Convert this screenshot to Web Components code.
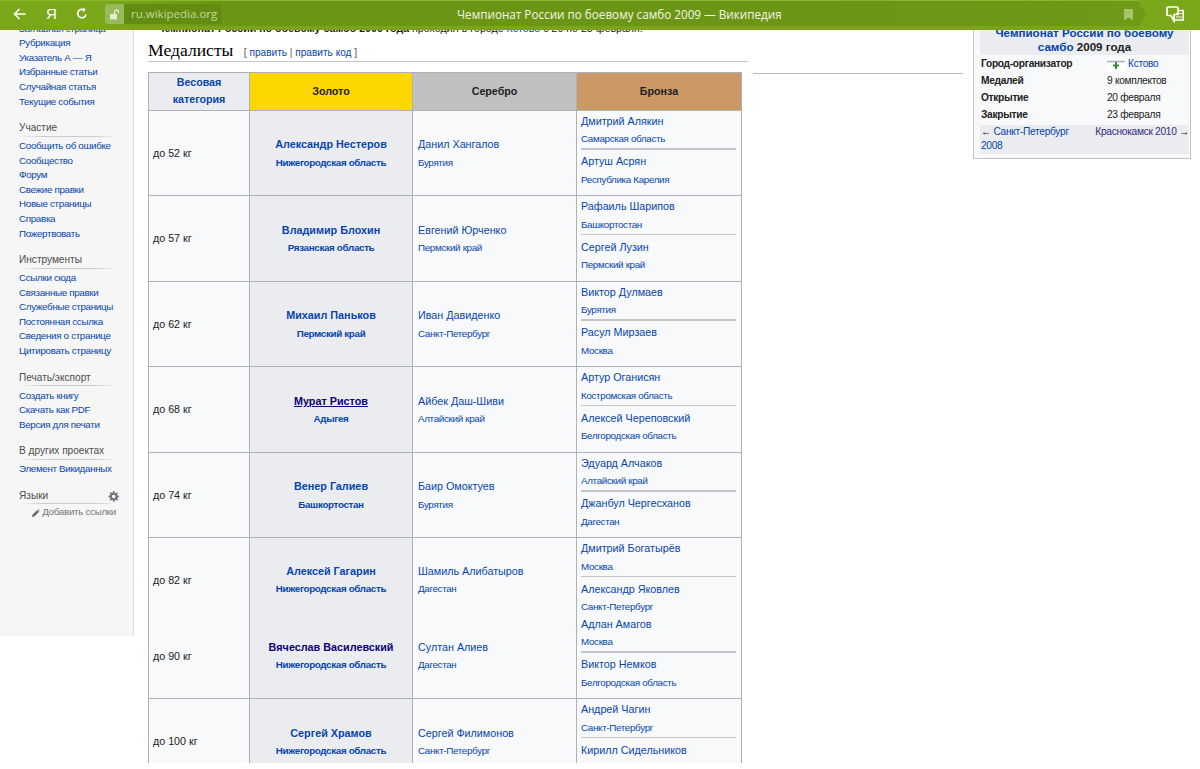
<!DOCTYPE html>
<html lang="ru">
<head>
<meta charset="utf-8">
<title>Чемпионат России по боевому самбо 2009 — Википедия</title>
<style>
  html, body { margin: 0; background: #fff; }
  body { font-family: "Liberation Sans", Arial, sans-serif; color: #202122; }
  #screen { position: relative; height: 763px; overflow: hidden; display: flex; align-items: flex-start; }
</style>
</head>
<body>
<div id="screen">
  <browser-bar title-text="Чемпионат России по боевому самбо 2009 — Википедия" address="ru.wikipedia.org"></browser-bar>

  <wiki-sidebar>
    <side-portlet first>
      <a>Заглавная страница</a><a>Рубрикация</a><a>Указатель А — Я</a><a>Избранные статьи</a><a>Случайная статья</a><a>Текущие события</a>
    </side-portlet>
    <side-portlet heading="Участие">
      <a>Сообщить об ошибке</a><a>Сообщество</a><a>Форум</a><a>Свежие правки</a><a>Новые страницы</a><a>Справка</a><a>Пожертвовать</a>
    </side-portlet>
    <side-portlet heading="Инструменты">
      <a>Ссылки сюда</a><a>Связанные правки</a><a>Служебные страницы</a><a>Постоянная ссылка</a><a>Сведения о странице</a><a>Цитировать страницу</a>
    </side-portlet>
    <side-portlet heading="Печать/экспорт">
      <a>Создать книгу</a><a>Скачать как PDF</a><a>Версия для печати</a>
    </side-portlet>
    <side-portlet heading="В других проектах">
      <a>Элемент Викиданных</a>
    </side-portlet>
    <side-portlet heading="Языки" gear>
      <lang-add>Добавить ссылки</lang-add>
    </side-portlet>
  </wiki-sidebar>

  <wiki-article>
    <medal-table></medal-table>
  </wiki-article>

  <info-box></info-box>
</div>

<script>
// Browser toolbar, lies over the scrolled page
class BrowserBar extends HTMLElement {
  constructor() {
    super();
    this.attachShadow({ mode: 'open' });
  }

  connectedCallback() {
    this.shadowRoot.innerHTML = `
      <style>
        :host {
          position: absolute;
          top: 0;
          left: 0;
          right: 0;
          height: 30px;
          z-index: 5;
          display: block;
          font-family: "Open Sans", "Liberation Sans", sans-serif;
        }
        .bar {
          height: 30px;
          box-sizing: border-box;
          border-top: 1px solid #8cb52c;
          border-bottom: 4px solid #7ba41b;
          background: linear-gradient(90deg, #7ba71b 0, #7ba71b 95px, #6b9515 230px, #6b9515 800px, #6f9a17 1139px);
          display: flex;
          align-items: center;
          position: relative;
          color: #fff;
        }
        .nav { display: flex; align-items: center; width: 105px; flex: none; }
        .nav svg, .nav span { display: block; }
        .back { margin-left: 13px; }
        .ya { margin-left: 20px; width: 9px; font: 15px "Liberation Sans", sans-serif; text-align: center; }
        .reload { margin-left: 21px; }
        .lock {
          width: 19px;
          height: 20px;
          margin-top: 1px;
          border-radius: 3px 0 0 3px;
          background: #97ba5a;
          display: flex;
          align-items: center;
          justify-content: center;
          flex: none;
        }
        .addr {
          height: 20px;
          margin-top: 1px;
          width: 98px;
          flex: none;
          box-sizing: border-box;
          padding-left: 7px;
          background: #648c13;
          border-radius: 0 3px 3px 0;
          font-size: 11.5px;
          line-height: 20px;
          color: #c5d79b;
          white-space: nowrap;
        }
        .title {
          position: absolute;
          left: 457px;
          top: 3px;
          line-height: 20px;
          font-size: 11.7px;
          color: #f2f6e6;
          white-space: nowrap;
        }
        .right {
          position: absolute;
          right: 0;
          top: -1px;
          width: 61px;
          height: 30px;
          background: #7ba71b;
        }
        .chevron { position: absolute; left: 0; top: 3px; }
        .mark { position: absolute; left: 1124px; top: 8px; }
        .bubbles { position: absolute; left: 27px; top: 6px; }
      </style>
      <div class="bar">
        <div class="nav">
          <svg class="back" width="13" height="12" viewBox="0 0 13 12" fill="none" stroke="#fff" stroke-width="1.6">
            <path d="M12.5 6H1.500M6.500 1L1.500 6l5 5"/>
          </svg>
          <span class="ya">Я</span>
          <svg class="reload" width="12" height="13" viewBox="0 0 12 13" fill="none" stroke="#fff" stroke-width="1.6">
            <path d="M10 7.500a4.200 4.200 0 1 1-2-4.600"/>
            <path d="M7 0.500l2.800 2.300L7 5.200" fill="#fff" stroke="none"/>
          </svg>
        </div>
        <div class="lock">
          <svg width="11" height="11" viewBox="0 0 11 11">
            <path d="M1 5h7v5.500H1z" fill="#e4edd0"/>
            <path d="M5.500 5V3a2 2 0 0 1 4 0v1" fill="none" stroke="#e4edd0" stroke-width="1.3"/>
          </svg>
        </div>
        <div class="addr">${this.getAttribute('address')}</div>
        <div class="title">${this.getAttribute('title-text')}</div>
        <svg class="mark" width="9" height="12" viewBox="0 0 9 12"><path d="M0 0h9v11.500L4.500 8.500 0 11.500z" fill="#a6c26a"/></svg>
        <div class="right">
          <svg class="chevron" width="8" height="23" viewBox="0 0 8 23"><path d="M0 0l7.500 11.500L0 23z" fill="#6f9a17"/></svg>
          <svg class="bubbles" width="18" height="17" viewBox="0 0 18 17" fill="none" stroke="#fff" stroke-width="1.7">
            <path d="M2 1h9a1 1 0 0 1 1 1v6.500H8V15L4.800 9.500H2a1 1 0 0 1-1-1V2a1 1 0 0 1 1-1z"/>
            <path d="M12 4.500h5.200V14H8"/>
            <path d="M10 7.500h5.500M10 11h5.500" stroke-width="1.2"/>
          </svg>
        </div>
      </div>
    `;
  }
}

class WikiSidebar extends HTMLElement {
  constructor() {
    super();
    this.attachShadow({ mode: 'open' });
  }

  connectedCallback() {
    this.shadowRoot.innerHTML = `
      <style>
        :host {
          display: block;
          flex: none;
          box-sizing: border-box;
          width: 134px;
          height: 636px;
          padding: 21.6px 15px 0 19px;
          background: #f6f6f6;
          border-right: 1px solid #cfe2f3;
        }
      </style>
      <slot></slot>
    `;
  }
}

// One block of sidebar links
class SidePortlet extends HTMLElement {
  constructor() {
    super();
    this.attachShadow({ mode: 'open' });
  }

  connectedCallback() {
    const heading = this.getAttribute('heading');
    const gear = this.hasAttribute('gear') ? `
      <svg class="gear" width="11" height="11" viewBox="0 0 24 24" fill="#72777d">
        <path d="M24 13.500v-3l-3.200-.6a9 9 0 0 0-.9-2.200l1.800-2.700-2.100-2.100-2.700 1.800a9 9 0 0 0-2.200-.9L14.100 0h-3l-.6 3.200a9 9 0 0 0-2.200.9L5.600 2.300 3.500 4.400l1.800 2.700a9 9 0 0 0-.9 2.200L1 10.500v3l3.400.6a9 9 0 0 0 .9 2.200l-1.800 2.700 2.100 2.100 2.700-1.800a9 9 0 0 0 2.200.9l.6 3.200h3l.6-3.200a9 9 0 0 0 2.200-.9l2.700 1.800 2.100-2.100-1.800-2.700a9 9 0 0 0 .9-2.200zM12.500 16a4 4 0 1 1 0-8 4 4 0 0 1 0 8z"/>
      </svg>` : '';
    this.shadowRoot.innerHTML = `
      <style>
        :host {
          display: block;
          margin-top: 12px;
          font-size: 10.1px;
          line-height: 14.6px;
        }
        :host([first]) { margin-top: 0; }
        .head {
          position: relative;
          color: #4d4d4d;
          padding-bottom: 1px;
          margin-bottom: 2.3px;
          background: linear-gradient(90deg, #f6f6f6 0, #c8ccd1 25%, #c8ccd1 75%, #f6f6f6 100%) bottom / 100% 1px no-repeat;
        }
        .gear { position: absolute; right: -1px; top: 2px; }
        ::slotted(a) {
          display: block;
          font-size: 9.8px;
          letter-spacing: -0.32px;
          color: #0645ad;
          white-space: nowrap;
        }
      </style>
      ${heading ? `<div class="head">${heading}${gear}</div>` : ''}
      <slot></slot>
    `;
  }
}

class LangAdd extends HTMLElement {
  constructor() {
    super();
    this.attachShadow({ mode: 'open' });
  }

  connectedCallback() {
    this.shadowRoot.innerHTML = `
      <style>
        :host {
          display: flex;
          align-items: center;
          justify-content: flex-end;
          gap: 2px;
          font-size: 9.8px;
          letter-spacing: -0.3px;
          color: #72777d;
          white-space: nowrap;
          margin-top: -1.5px;
          padding-right: 2px;
        }
      </style>
      <svg width="8" height="8" viewBox="0 0 9 9"><path d="M0 9l.5-2.500L6 1l2 2-5.500 5.500zM6.700.3l.6-.3L9 1.700l-.3.600z" fill="#666"/></svg>
      <slot></slot>
    `;
  }
}

// Section heading and the text that sits above it
class WikiArticle extends HTMLElement {
  constructor() {
    super();
    this.attachShadow({ mode: 'open' });
  }

  connectedCallback() {
    this.shadowRoot.innerHTML = `
      <style>
        :host {
          display: block;
          flex: none;
          width: 600px;
          margin-left: 14px;
          padding-top: 21px;
        }
        .intro {
          font-size: 10.65px;
          line-height: 14px;
          margin-left: 9px;
          white-space: nowrap;
        }
        .intro span { color: #0645ad; }
        h2 {
          margin: 0 0 10px;
          height: 27px;
          box-sizing: border-box;
          border-bottom: 1.5px solid #c4c8cc;
          font: normal 17.6px/20px "Liberation Serif", "Times New Roman", serif;
          color: #000;
          padding-top: 5px;
          white-space: nowrap;
        }
        .edit {
          font: 10.1px "Liberation Sans", sans-serif;
          color: #54595d;
          margin-left: 6px;
        }
        .edit a { color: #0645ad; }
      </style>
      <div class="intro"><b>Чемпионат России по боевому самбо 2009 года</b> проходил в городе <span>Кстово</span> с 20 по 23 февраля.</div>
      <h2>Медалисты <span class="edit">[ <a>править</a> | <a>править код</a> ]</span></h2>
      <slot></slot>
    `;
  }
}

const ROWS = [
  { cat: 'до 52 кг', gold: ['Александр Нестеров', 'Нижегородская область'], silver: ['Данил Хангалов', 'Бурятия'], bronze: [['Дмитрий Алякин', 'Самарская область'], ['Артуш Асрян', 'Республика Карелия']] },
  { cat: 'до 57 кг', gold: ['Владимир Блохин', 'Рязанская область'], silver: ['Евгений Юрченко', 'Пермский край'], bronze: [['Рафаиль Шарипов', 'Башкортостан'], ['Сергей Лузин', 'Пермский край']] },
  { cat: 'до 62 кг', gold: ['Михаил Паньков', 'Пермский край'], silver: ['Иван Давиденко', 'Санкт-Петербург'], bronze: [['Виктор Дулмаев', 'Бурятия'], ['Расул Мирзаев', 'Москва']] },
  { cat: 'до 68 кг', gold: ['Мурат Ристов', 'Адыгея'], hover: true, silver: ['Айбек Даш-Шиви', 'Алтайский край'], bronze: [['Артур Оганисян', 'Костромская область'], ['Алексей Череповский', 'Белгородская область']] },
  { cat: 'до 74 кг', gold: ['Венер Галиев', 'Башкортостан'], silver: ['Баир Омоктуев', 'Бурятия'], bronze: [['Эдуард Алчаков', 'Алтайский край'], ['Джанбул Чергесханов', 'Дагестан']] },
  { cat: 'до 82 кг', cls: 'r82', gold: ['Алексей Гагарин', 'Нижегородская область'], silver: ['Шамиль Алибатыров', 'Дагестан'], bronze: [['Дмитрий Богатырёв', 'Москва'], ['Александр Яковлев', 'Санкт-Петербург'], ['Адлан Амагов', 'Москва'], ['Виктор Немков', 'Белгородская область']] },
  { cat: 'до 90 кг', cls: 'r90', gold: ['Вячеслав Василевский', 'Нижегородская область'], visited: true, silver: ['Султан Алиев', 'Дагестан'] },
  { cat: 'до 100 кг', gold: ['Сергей Храмов', 'Нижегородская область'], silver: ['Сергей Филимонов', 'Санкт-Петербург'], bronze: [['Андрей Чагин', 'Санкт-Петербург'], ['Кирилл Сидельников', '']] }
];

class MedalTable extends HTMLElement {
  constructor() {
    super();
    this.attachShadow({ mode: 'open' });
  }

  connectedCallback() {
    this.shadowRoot.innerHTML = `
      <style>
        :host { display: block; width: 594px; }
        table {
          width: 594px;
          table-layout: fixed;
          border-collapse: collapse;
          font-size: 10.7px;
          color: #202122;
          background: #f8f9fa;
        }
        th, td { border: 1px solid #adb2b8; padding: 0 5px; }
        tr.head { height: 37.5px; }
        th {
          font-size: 10.7px;
          line-height: 17.3px;
          color: #202122;
          background: #eaecf0;
        }
        th a { color: #0645ad; }
        th.gold { background: #ffd700; }
        th.silver { background: #c0c0c0; }
        th.bronze { background: #cc9966; }
        tr.row { height: 85.5px; }
        tr.r82 { height: 84.5px; }
        tr.r90 { height: 76.5px; }
        tr.r82 > td { border-bottom: 0; }
        tr.r90 > td { padding-bottom: 8px; border-top: 0; }
        td:first-child { padding-left: 4px; }
        td.gold { background: #eaecf0; text-align: center; font-weight: bold; }
        /* names sit a bit under the cell's middle in the plain rows */
        tr:not(.r82):not(.r90) > td.gold, tr:not(.r82):not(.r90) > td.silver { padding-top: 1.5px; }
        td.bronze { vertical-align: top; padding-top: 2.3px; padding-left: 4px; }
        .name, .region { line-height: 17.3px; white-space: nowrap; }
        .name { font-size: 10.75px; color: #0645ad; }
        .region { font-size: 9.8px; letter-spacing: -0.32px; color: #0645ad; }
        td.gold .name { font-size: 10.8px; }
        td.gold .region { font-size: 9.8px; letter-spacing: -0.33px; }
        td.gold .hover { color: #0b0080; text-decoration: underline; }
        td.gold .visited { color: #0b0080; }
        hr { border: 0; height: 1.5px; background: #c2c5c9; margin: 1px 0 3.600px; }
      </style>
      <table>
        <colgroup>
          <col style="width:101px"><col style="width:163px"><col style="width:164px"><col style="width:165px">
        </colgroup>
        <tr class="head">
          <th><a>Весовая категория</a></th>
          <th class="gold">Золото</th>
          <th class="silver">Серебро</th>
          <th class="bronze">Бронза</th>
        </tr>
        ${ROWS.map(r => this.renderRow(r)).join('')}
      </table>
    `;
  }

  person(p, nameCls = '') {
    return `<div class="name ${nameCls}">${p[0]}</div>${p[1] ? `<div class="region">${p[1]}</div>` : ''}`;
  }

  renderRow(r) {
    const nameCls = r.hover ? 'hover' : r.visited ? 'visited' : '';
    let bronze = '';
    if (r.bronze) {
      // hr only between the two medalists of one weight
      const cells = r.bronze.map((p, i) => this.person(p) + (i % 2 === 0 ? '<hr>' : ''));
      bronze = `<td class="bronze" ${r.bronze.length > 2 ? 'rowspan="2"' : ''}>${cells.join('')}</td>`;
    }
    return `
      <tr class="row ${r.cls || ''}">
        <td>${r.cat}</td>
        <td class="gold">${this.person(r.gold, nameCls)}</td>
        <td class="silver">${this.person(r.silver)}</td>
        ${bronze}
      </tr>
    `;
  }
}

class InfoBox extends HTMLElement {
  constructor() {
    super();
    this.attachShadow({ mode: 'open' });
  }

  connectedCallback() {
    this.shadowRoot.innerHTML = `
      <style>
        :host {
          display: block;
          flex: none;
          box-sizing: border-box;
          width: 218px;
          height: 149px;
          margin-left: 225px;
          margin-top: 9.5px;
          padding: 0 1px 4px 6px;
          background: #f8f9fa;
          border: 1px solid #c0c4c9;
          font-size: 10.2px;
          letter-spacing: -0.3px;
          line-height: 14px;
          color: #202122;
          position: relative;
        }
        a { color: #0645ad; }
        .rule {
          position: absolute;
          left: -221px;
          top: 62.5px;
          width: 210px;
          height: 1px;
          background: #bbbdc0;
        }
        .title {
          margin-top: 15px;
          padding-bottom: 1px;
          background: #eaecf0;
          text-align: center;
          font-size: 11.6px;
          letter-spacing: 0;
          font-weight: bold;
          line-height: 14px;
        }
        .grid {
          display: grid;
          grid-template-columns: 126px 1fr;
          grid-auto-rows: 17px;
          align-items: center;
          margin-top: 1px;
          padding-left: 1px;
        }
        .grid b { font-weight: bold; }
        .city { display: flex; align-items: center; gap: 3px; }
        .nav {
          display: flex;
          justify-content: space-between;
          margin-top: 1.5px;
          height: 29px;
          padding-left: 1px;
          background: #eaecf0;
        }
        .nav div { width: 110px; }
        .nav .next { white-space: nowrap; text-align: right; color: #202122; }
        .next a { color: #2f2a84; }
      </style>
      <div class="rule"></div>
      <div class="title"><a>Чемпионат России по боевому самбо</a> 2009 года</div>
      <div class="grid">
        <b>Город-организатор</b>
        <span class="city">
          <svg width="18" height="12" viewBox="0 0 18 12">
            <rect width="18" height="12" fill="#fff"/>
            <path d="M0 3.500h18" stroke="#a9a6c8" stroke-width="1.500"/>
            <path d="M9 4v7M6 7.500h6" stroke="#3c8a3a" stroke-width="2"/>
          </svg>
          <a>Кстово</a>
        </span>
        <b>Медалей</b><span>9 комплектов</span>
        <b>Открытие</b><span>20 февраля</span>
        <b>Закрытие</b><span>23 февраля</span>
      </div>
      <div class="nav">
        <div>← <a>Санкт-Петербург 2008</a></div>
        <div class="next"><a>Краснокамск 2010</a> →</div>
      </div>
    `;
  }
}

customElements.define('browser-bar', BrowserBar);
customElements.define('wiki-sidebar', WikiSidebar);
customElements.define('side-portlet', SidePortlet);
customElements.define('lang-add', LangAdd);
customElements.define('wiki-article', WikiArticle);
customElements.define('medal-table', MedalTable);
customElements.define('info-box', InfoBox);
</script>
</body>
</html>
